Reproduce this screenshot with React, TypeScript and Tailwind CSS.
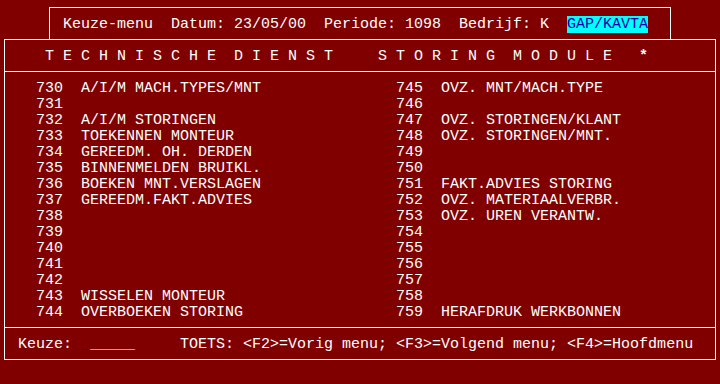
const left: [string, string][] = [
  ['730', 'A/I/M MACH.TYPES/MNT'],
  ['731', ''],
  ['732', 'A/I/M STORINGEN'],
  ['733', 'TOEKENNEN MONTEUR'],
  ['734', 'GEREEDM. OH. DERDEN'],
  ['735', 'BINNENMELDEN BRUIKL.'],
  ['736', 'BOEKEN MNT.VERSLAGEN'],
  ['737', 'GEREEDM.FAKT.ADVIES'],
  ['738', ''],
  ['739', ''],
  ['740', ''],
  ['741', ''],
  ['742', ''],
  ['743', 'WISSELEN MONTEUR'],
  ['744', 'OVERBOEKEN STORING'],
]

const right: [string, string][] = [
  ['745', 'OVZ. MNT/MACH.TYPE'],
  ['746', ''],
  ['747', 'OVZ. STORINGEN/KLANT'],
  ['748', 'OVZ. STORINGEN/MNT.'],
  ['749', ''],
  ['750', ''],
  ['751', 'FAKT.ADVIES STORING'],
  ['752', 'OVZ. MATERIAALVERBR.'],
  ['753', 'OVZ. UREN VERANTW.'],
  ['754', ''],
  ['755', ''],
  ['756', ''],
  ['757', ''],
  ['758', ''],
  ['759', 'HERAFDRUK WERKBONNEN'],
]

function MenuColumn({ items }: { items: [string, string][] }) {
  return (
    <div className="flex flex-col">
      {items.map(([nr, label]) => (
        <div key={nr} className="h-[16px] whitespace-pre">
          {nr}  {label}
        </div>
      ))}
    </div>
  )
}

export default function App() {
  return (
    <div className="w-[720px] h-[384px] overflow-hidden bg-[#800000] text-white font-['Liberation_Mono',monospace] text-[15px] leading-[16px] pt-[7px]">
      {/* kopregel */}
      <div className="ml-[49px] w-[622px] h-[32px] border-t border-x border-white pt-[9px] pl-[13px]">
        <div className="h-[16px] whitespace-pre">
          {'Keuze-menu  Datum: 23/05/00  Periode: 1098  Bedrijf: K  '}
          <span className="bg-[#00ffff] text-[#0000a8]">GAP/KAVTA</span>
        </div>
      </div>

      {/* hoofdscherm */}
      <div className="ml-[4px] w-[712px] h-[321px] border border-white flex flex-col">
        <div className="h-[32px] border-b border-white pt-[9px] pl-[40px]">
          <div className="h-[16px] whitespace-pre">
            {'T E C H N I S C H E  D I E N S T     S T O R I N G  M O D U L E   '}
            <span className="font-bold">*</span>
          </div>
        </div>

        <div className="h-[256px] border-b border-white pt-[9px] pl-[31px] grid grid-cols-[360px_1fr]">
          <MenuColumn items={left} />
          <MenuColumn items={right} />
        </div>

        <div className="pt-[9px] pl-[13px]">
          <div className="h-[16px] whitespace-pre">
            {'Keuze: '}
            <span className="text-black">_</span>
            {'_____     TOETS: <F2>=Vorig menu; <F3>=Volgend menu; <F4>=Hoofdmenu'}
          </div>
        </div>
      </div>
    </div>
  )
}
